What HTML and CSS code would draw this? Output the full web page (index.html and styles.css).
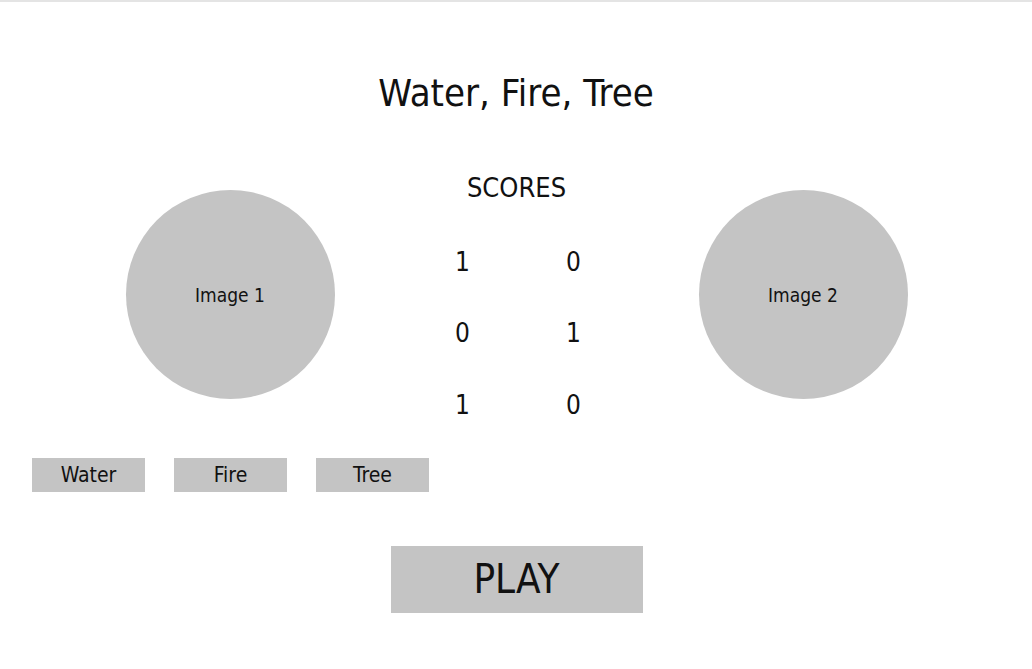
FILE: index.html
```html
<!DOCTYPE html>
<html lang="en">
<head>
<meta charset="utf-8">
<title>Water, Fire, Tree</title>
<link rel="stylesheet" href="styles.css">
</head>
<body>
<div class="page">
  <h1 class="title">Water, Fire, Tree</h1>
  <section class="board">
    <div class="circle">Image 1</div>
    <div class="scores">
      <div class="scores-title">SCORES</div>
      <div class="score-grid">
        <span>1</span><span>0</span>
        <span>0</span><span>1</span>
        <span>1</span><span>0</span>
      </div>
    </div>
    <div class="circle">Image 2</div>
  </section>
  <div class="choices">
    <button class="choice">Water</button>
    <button class="choice">Fire</button>
    <button class="choice">Tree</button>
  </div>
  <div class="play-row">
    <button class="play">PLAY</button>
  </div>
</div>
</body>
</html>
```
FILE: styles.css
```css
html, body {
  margin: 0;
  padding: 0;
  background: #ffffff;
}
body {
  font-family: "DejaVu Sans Condensed", "Roboto", sans-serif;
  color: #111111;
}
.page {
  border-top: 2px solid #e4e4e4;
  height: 667px;
  box-sizing: border-box;
}
.title {
  margin: 0;
  padding-top: 67px;
  font-size: 38px;
  line-height: 48px;
  font-weight: 400;
  text-align: center;
}
.board {
  margin-top: 53px;
  display: grid;
  grid-template-columns: 209px 364px 209px;
  justify-content: center;
  padding-left: 1px;
}
.circle {
  margin-top: 20px;
  width: 209px;
  height: 209px;
  border-radius: 50%;
  background: #c4c4c4;
  display: flex;
  align-items: center;
  justify-content: center;
  font-size: 19px;
}
.scores {
  display: flex;
  flex-direction: column;
  align-items: center;
}
.scores-title {
  font-size: 27px;
  line-height: 36px;
}
.score-grid {
  margin-top: 20px;
  padding-left: 3px;
  display: grid;
  grid-template-columns: 111px 111px;
  grid-auto-rows: 71.5px;
  align-items: center;
  justify-items: center;
  font-size: 26px;
}
.choices {
  margin-top: 17px;
  padding-left: 32px;
  display: flex;
  gap: 29px;
}
.choice {
  width: 113px;
  height: 34px;
  border: none;
  background: #c4c4c4;
  font-family: inherit;
  font-size: 21px;
  color: #111111;
  padding: 0;
}
.play-row {
  margin-top: 54px;
  display: flex;
  justify-content: center;
  padding-left: 1px;
}
.play {
  width: 252px;
  height: 67px;
  border: none;
  background: #c4c4c4;
  font-family: inherit;
  font-size: 40px;
  color: #111111;
  padding: 0;
}
```
